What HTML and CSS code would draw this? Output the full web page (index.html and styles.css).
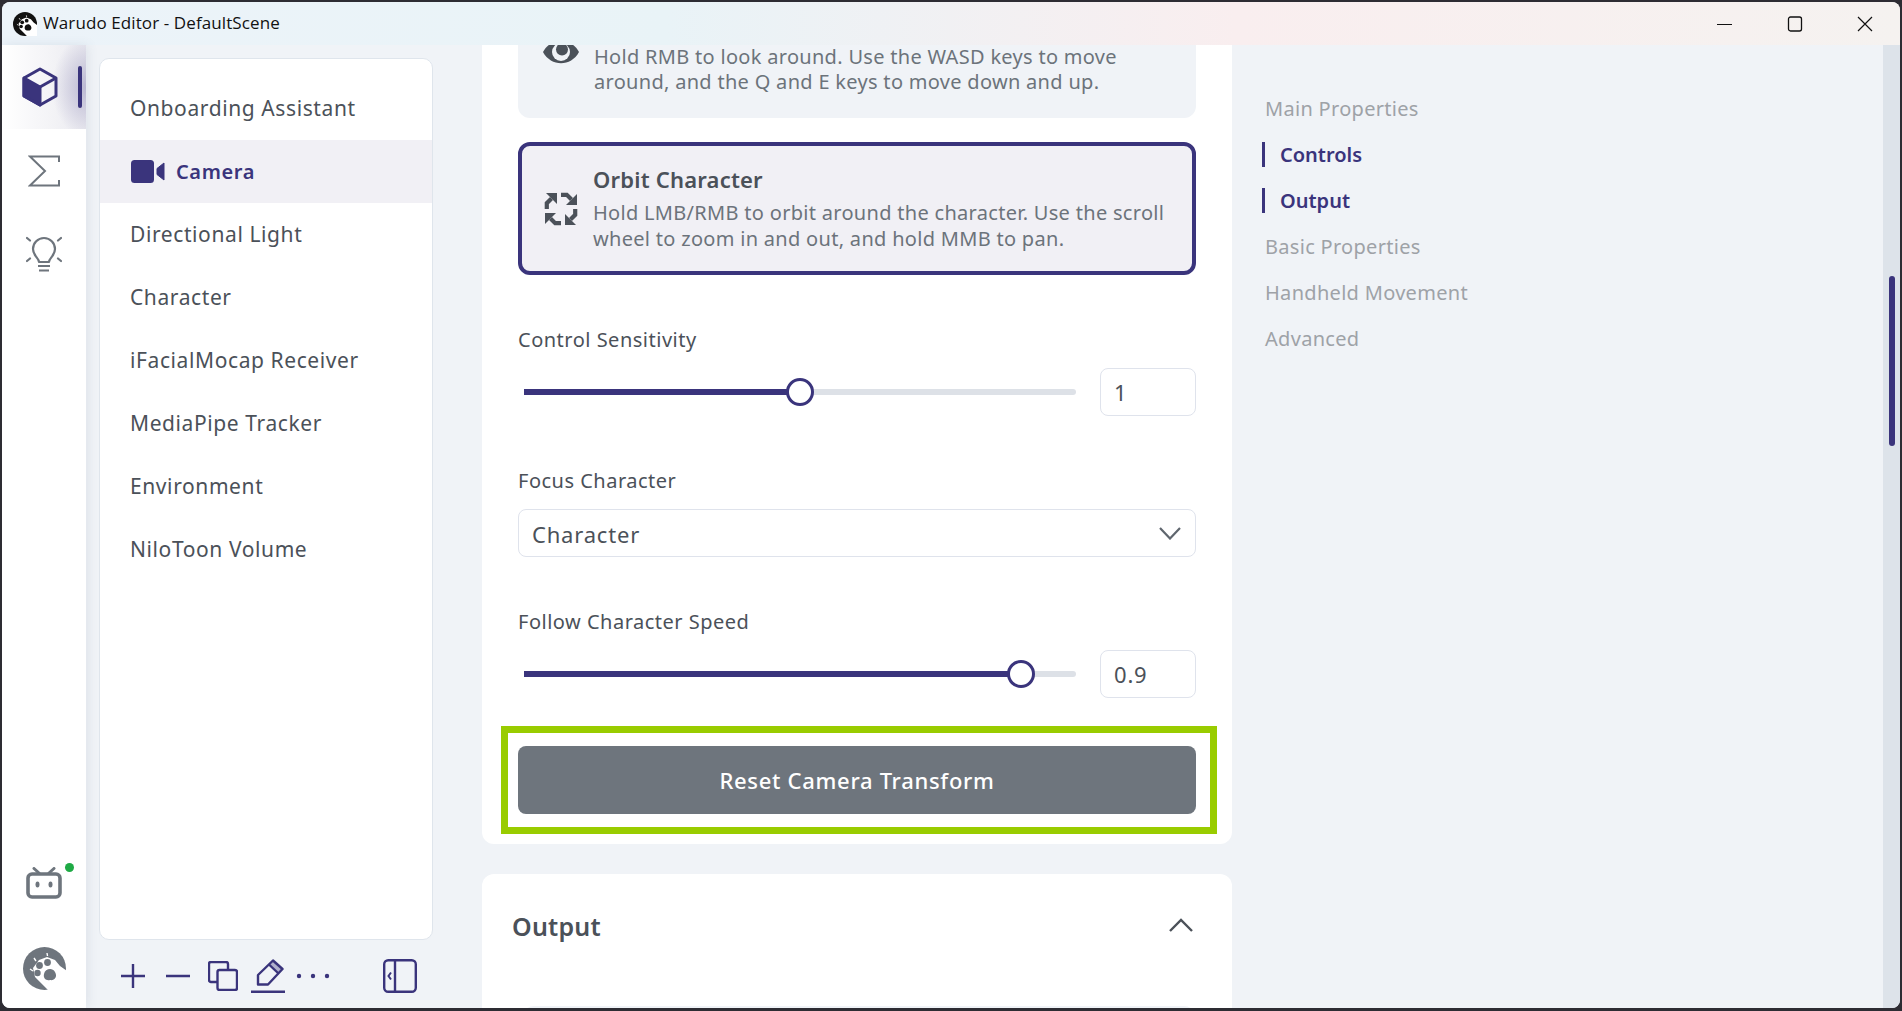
FILE: index.html
```html
<!DOCTYPE html>
<html>
  <head>
    <title>Warudo Editor - DefaultScene</title>
    <link rel="stylesheet" href="styles.css">
  </head>
  <body>
    <svg class="defs" width="0" height="0">
      <symbol id="paw" viewBox="0 0 43 43">
        <circle cx="21.5" cy="21.5" r="21.5" fill="currentColor"/>
        <path d="M12 30 L10 21 L16 13 L24 10 L32 13 L37 19 L44 24 V44 H26 Z" fill="#fff"/>
        <circle cx="16.5" cy="18.5" r="3.4" fill="currentColor"/>
        <circle cx="24.5" cy="15.5" r="3.4" fill="currentColor"/>
        <circle cx="14.5" cy="26" r="3.2" fill="currentColor"/>
        <path d="M21 27 C22 22 29 20 32 25 C35 30 31 34 27 33 C23 34 20 31 21 27Z" fill="currentColor"/>
        <path d="M11 11 L13 14 M24 6 L24.500 9 M7 22 L10 24" stroke="#fff" stroke-width="1.400"/>
      </symbol>
    </svg>

    <div class="window">
      <div class="titlebar">
        <svg class="title-logo" width="24" height="24"><use href="#paw"/></svg>
        <span class="title-text">Warudo Editor - DefaultScene</span>
        <div class="win-buttons">
          <div class="win-btn">
            <svg width="16" height="16" viewBox="0 0 16 16"><path d="M0 8.500 H15" stroke="#111" fill="none"/></svg>
          </div>
          <div class="win-btn">
            <svg width="16" height="16" viewBox="0 0 16 16"><rect x="1.500" y="1" width="13" height="14" rx="2" stroke="#111" stroke-width="1.300" fill="none"/></svg>
          </div>
          <div class="win-btn">
            <svg width="16" height="16" viewBox="0 0 16 16"><path d="M1 1 L15 15 M15 1 L1 15" stroke="#111" stroke-width="1.200" fill="none"/></svg>
          </div>
        </div>
      </div>

      <div class="app">
        <div class="rail">
          <div class="rail-item selected">
            <svg width="36" height="40" viewBox="0 0 36 40">
              <path d="M18 2 L34 11 V29 L18 38 L2 29 V11 Z" fill="none" stroke="#3a347c" stroke-width="3" stroke-linejoin="round"/>
              <path d="M2 11 L18 20 V38 L2 29 Z" fill="#3a347c" stroke="#3a347c" stroke-width="3" stroke-linejoin="round"/>
              <path d="M18 20 L34 11" stroke="#3a347c" stroke-width="3"/>
            </svg>
            <span class="rail-bar"></span>
          </div>
          <div class="rail-item">
            <svg width="32" height="32" viewBox="0 0 32 32">
              <path d="M31 7 V1.500 H2 L17 16 L2 30.500 H31 V25" fill="none" stroke="#6e757d" stroke-width="2"/>
            </svg>
          </div>
          <div class="rail-item">
            <svg width="36" height="38" viewBox="0 0 36 38">
              <path d="M13 26 C13 22 7 20 7 13 A11 11 0 0 1 29 13 C29 20 23 22 23 26 Z" fill="none" stroke="#6e757d" stroke-width="2.200" stroke-linejoin="round"/>
              <path d="M12 30 H24 M13 34.500 H23" stroke="#6e757d" stroke-width="2.200"/>
              <path d="M1 2 L4 4.500 M35 2 L32 4.500 M1 25 L4 22.500 M35 25 L32 22.500" stroke="#6e757d" stroke-width="2.200" stroke-linecap="round"/>
            </svg>
          </div>
          <div class="rail-bottom">
            <div class="tv">
              <svg width="36" height="32" viewBox="0 0 36 32">
                <path d="M8 1.500 L13 6 M28 1.500 L23 6" stroke="#6e757d" stroke-width="3" stroke-linecap="round"/>
                <rect x="2" y="7" width="32" height="23" rx="4" fill="none" stroke="#6e757d" stroke-width="3.600"/>
                <ellipse cx="11.500" cy="17.500" rx="2" ry="3" fill="#6e757d"/>
                <ellipse cx="24.500" cy="17.500" rx="2" ry="3" fill="#6e757d"/>
              </svg>
              <span class="status-dot"></span>
            </div>
            <svg class="rail-logo" width="43" height="43"><use href="#paw"/></svg>
          </div>
        </div>

        <div class="sidebar">
          <div class="entity-list">
            <div class="entity">Onboarding Assistant</div>
            <div class="entity current">
              <svg width="34" height="23" viewBox="0 0 34 23">
                <rect width="23" height="23" rx="3.500" fill="#3a347c"/>
                <path d="M26 8.500 L33 3 V20 L26 14.500 Z" fill="#3a347c" stroke="#3a347c" stroke-linejoin="round"/>
              </svg>
              <span>Camera</span>
            </div>
            <div class="entity">Directional Light</div>
            <div class="entity">Character</div>
            <div class="entity">iFacialMocap Receiver</div>
            <div class="entity">MediaPipe Tracker</div>
            <div class="entity">Environment</div>
            <div class="entity">NiloToon Volume</div>
          </div>
          <div class="toolbar">
            <svg class="tool-plus" width="24" height="24" viewBox="0 0 24 24"><path d="M0 12 H24 M12 0 V24" stroke="#3a347c" stroke-width="2.400"/></svg>
            <svg class="tool-minus" width="24" height="24" viewBox="0 0 24 24"><path d="M0 12 H24" stroke="#3a347c" stroke-width="2.400"/></svg>
            <svg class="tool-copy" width="30" height="30" viewBox="0 0 30 30">
              <path d="M9 21 H3 A2 2 0 0 1 1 19 V3 A2 2 0 0 1 3 1 H18 A2 2 0 0 1 20 3 V9" fill="none" stroke="#3a347c" stroke-width="2.400"/>
              <rect x="9.500" y="9" width="19.500" height="20" rx="2" fill="none" stroke="#3a347c" stroke-width="2.400"/>
            </svg>
            <svg class="tool-edit" width="34" height="34" viewBox="0 0 34 34">
              <path d="M7 25.500 V16 L22 1.500 L31.500 10 L17 25.500 Z" fill="none" stroke="#3a347c" stroke-width="2.400" stroke-linejoin="round"/>
              <path d="M18 5.500 L27.500 14.500" stroke="#3a347c" stroke-width="2.400"/>
              <path d="M22 1.500 L31.500 10 L27.500 14.500 L18 5.500 Z" fill="#3a347c" fill-opacity=".35"/>
              <path d="M0 32.800 H34" stroke="#3a347c" stroke-width="2.400"/>
            </svg>
            <svg class="tool-more" width="36" height="6" viewBox="0 0 36 6">
              <circle cx="4" cy="3" r="2.200" fill="#3a347c"/>
              <circle cx="18" cy="3" r="2.200" fill="#3a347c"/>
              <circle cx="32" cy="3" r="2.200" fill="#3a347c"/>
            </svg>
            <svg class="tool-panel" width="34" height="34" viewBox="0 0 34 34">
              <rect x="1.200" y="1.200" width="31.600" height="31.600" rx="4" fill="none" stroke="#3a347c" stroke-width="2.400"/>
              <path d="M12 1 V33" stroke="#3a347c" stroke-width="2.400"/>
              <path d="M8 13.500 L5.500 17 L8 20.500" fill="none" stroke="#3a347c" stroke-width="2"/>
            </svg>
          </div>
        </div>

        <div class="main">
          <div class="main-inner">
            <div class="section">
              <div class="mode-card">
                <svg class="mode-icon" width="36" height="28" viewBox="0 0 36 28">
                  <path d="M0 14 C8 -1 28 -1 36 14 C28 29 8 29 0 14Z" fill="#4b5159"/>
                  <circle cx="18" cy="14" r="9" fill="#f0f3f7"/>
                  <circle cx="19" cy="11.500" r="6" fill="#4b5159"/>
                </svg>
                <div>
                  <div class="mode-title-space"></div>
                  <div class="mode-desc">Hold RMB to look around. Use the WASD keys to move<br>around, and the Q and E keys to move down and up.</div>
                </div>
              </div>

              <div class="mode-card active">
                <svg class="mode-icon orbit" width="34" height="34" viewBox="0 0 34 34">
                  <g id="orbit-arrow">
                    <path d="M13 1 H2 L13 12 Z" fill="#4b5159"/>
                    <path d="M7.500 6.500 L2.800 11.200 V17" fill="none" stroke="#4b5159" stroke-width="4.200"/>
                  </g>
                  <use href="#orbit-arrow" transform="rotate(90 17 17)"/>
                  <use href="#orbit-arrow" transform="rotate(180 17 17)"/>
                  <use href="#orbit-arrow" transform="rotate(270 17 17)"/>
                </svg>
                <div>
                  <div class="mode-title">Orbit Character</div>
                  <div class="mode-desc">Hold LMB/RMB to orbit around the character. Use the scroll<br>wheel to zoom in and out, and hold MMB to pan.</div>
                </div>
              </div>

              <div class="field">
                <div class="field-label">Control Sensitivity</div>
                <div class="slider-row">
                  <div class="slider">
                    <div class="slider-fill" style="width: 50%"><span class="slider-thumb"></span></div>
                  </div>
                  <div class="num-input">1</div>
                </div>
              </div>

              <div class="field">
                <div class="field-label">Focus Character</div>
                <div class="select">
                  <span>Character</span>
                  <svg width="22" height="13" viewBox="0 0 22 13"><path d="M1 1 L11 11.500 L21 1" fill="none" stroke="#5f666e" stroke-width="2.200"/></svg>
                </div>
              </div>

              <div class="field">
                <div class="field-label">Follow Character Speed</div>
                <div class="slider-row">
                  <div class="slider">
                    <div class="slider-fill" style="width: 90%"><span class="slider-thumb"></span></div>
                  </div>
                  <div class="num-input">0.9</div>
                </div>
              </div>

              <div class="reset-wrap">
                <button class="reset-btn" type="button">Reset Camera Transform</button>
                <div class="highlight"></div>
              </div>
            </div>

            <div class="section output">
              <div class="output-head">
                <span>Output</span>
                <svg width="24" height="14" viewBox="0 0 24 14"><path d="M1 13 L12 2 L23 13" fill="none" stroke="#4b5159" stroke-width="2.400"/></svg>
              </div>
              <div class="output-box"></div>
            </div>
          </div>
        </div>

        <div class="outline">
          <div class="outline-item"><span>Main Properties</span></div>
          <div class="outline-item active"><span>Controls</span></div>
          <div class="outline-item active"><span>Output</span></div>
          <div class="outline-item"><span>Basic Properties</span></div>
          <div class="outline-item"><span>Handheld Movement</span></div>
          <div class="outline-item"><span>Advanced</span></div>
        </div>

        <div class="scrollbar"><div class="scroll-thumb"></div></div>
      </div>
    </div>
  </body>
</html>
```

FILE: styles.css
```css
html, body {
  margin: 0;
  height: 100%;
  overflow: hidden;
}

body {
  background: #2d2c33;
  padding: 2px 2px 3px 2px;
  box-sizing: border-box;
  font-family: "Noto Sans", sans-serif;
  color: #4b5159;
}

.defs {
  display: block;
  height: 0;
}

.window {
  height: 100%;
  border-radius: 8px;
  overflow: hidden;
  display: flex;
  flex-direction: column;
  background: #f0f3f7;
}

.titlebar {
  height: 43px;
  flex: none;
  display: flex;
  align-items: center;
  padding-left: 11px;
  background: linear-gradient(90deg, #ecf3f9 0%, #e9f3f7 35%, #f9eeef 65%, #f5f2f0 100%);
}

.title-logo {
  color: #111;
  margin-right: 6px;
}

.title-text {
  font-family: "Open Sans", sans-serif;
  font-size: 17px;
  letter-spacing: 0.1px;
  color: #111;
  padding-bottom: 2px;
}

.win-buttons {
  margin-left: auto;
  display: flex;
}

.win-btn {
  width: 70px;
  height: 43px;
  display: flex;
  align-items: center;
  justify-content: center;
}

.app {
  flex: 1;
  min-height: 0;
  display: grid;
  grid-template-columns: 84px 396px 750px 1fr 17px;
}

/* left rail */
.rail {
  background: #fff;
  display: flex;
  flex-direction: column;
  box-shadow: 2px 0 10px rgba(70, 85, 115, 0.1);
  position: relative;
}

.rail-item {
  height: 84px;
  flex: none;
  display: flex;
  align-items: center;
  padding-left: 20px;
  box-sizing: border-box;
  position: relative;
}

.rail-item:nth-child(2) {
  padding-left: 26px;
}

.rail-item:nth-child(3) {
  padding-left: 24px;
}

.rail-item.selected {
  background:
    radial-gradient(ellipse 34px 50px at 100% 50%, rgba(140, 135, 180, 0.5), rgba(140, 135, 180, 0) 100%),
    linear-gradient(90deg, #fff 0%, #f3f3f6 60%, #eaeaf0 100%);
}

.rail-bar {
  position: absolute;
  left: 76px;
  top: 21px;
  width: 4px;
  height: 42px;
  border-radius: 2px;
  background: #3a347c;
}

.rail-bottom {
  margin-top: auto;
  padding: 0 0 18px 21px;
  display: flex;
  flex-direction: column;
}

.tv {
  position: relative;
  width: 36px;
  height: 32px;
  margin: 0 0 48px 3px;
}

.tv svg {
  display: block;
}

.status-dot {
  position: absolute;
  left: 39px;
  top: -4px;
  width: 9px;
  height: 9px;
  border-radius: 50%;
  background: #1faa45;
}

.rail-logo {
  color: #6e757d;
  display: block;
}

/* entity list */
.sidebar {
  padding: 13px 0 0 13px;
  display: flex;
  flex-direction: column;
}

.entity-list {
  width: 334px;
  height: 882px;
  box-sizing: border-box;
  flex: none;
  background: #fff;
  border: 1px solid #dfe5ec;
  border-radius: 10px;
  padding-top: 18px;
}

.entity {
  height: 63px;
  box-sizing: border-box;
  display: flex;
  align-items: center;
  padding: 0 0 1px 30px;
  font-size: 21px;
  letter-spacing: 0.6px;
}

.entity.current {
  background: #f1f0f5;
  color: #3a347c;
  font-size: 20px;
  font-weight: 600;
  gap: 11px;
  letter-spacing: 0.6px;
  padding: 0 0 0 31px;
}

.toolbar {
  flex: 1;
  display: flex;
  align-items: center;
  padding: 4px 0 0 22px;
}

.toolbar svg {
  flex: none;
}

.tool-minus {
  margin-left: 21px;
}

.tool-copy {
  margin-left: 18px;
}

.tool-edit {
  margin-left: 13px;
}

.tool-more {
  margin-left: 10px;
}

.tool-panel {
  margin-left: 52px;
}

/* main column */
.main {
  overflow: hidden;
}

.main-inner {
  margin-top: -100px;
}

.section {
  background: #fff;
  border-radius: 12px;
  padding: 40px 36px 30px 36px;
}

.mode-card {
  height: 133px;
  box-sizing: border-box;
  margin-bottom: 24px;
  background: #f0f3f7;
  border-radius: 12px;
  display: flex;
  align-items: center;
  padding-left: 25px;
  gap: 15px;
}

.mode-card.active {
  background: #f1f0f5;
  border: 4px solid #3a347c;
  padding-left: 22px;
  margin-bottom: 0;
}

.mode-icon {
  flex: none;
}

.mode-icon.orbit {
  margin-top: 1px;
}

.mode-title {
  font-size: 22px;
  font-weight: 600;
  line-height: 30px;
  letter-spacing: 0.2px;
  margin: -2px 0 6px;
}

.mode-title-space {
  height: 35px;
}

.mode-desc {
  font-size: 20px;
  line-height: 25.5px;
  color: #6c737b;
  letter-spacing: 0.3px;
}

.field {
  margin-top: 53px;
}

.field-label {
  font-size: 20px;
  line-height: 24px;
  letter-spacing: 0.5px;
  margin-bottom: 16px;
}

.slider-row {
  display: flex;
  align-items: center;
  gap: 24px;
  padding-left: 6px;
}

.slider {
  flex: 1;
  height: 6px;
  border-radius: 3px;
  background: #dde1e7;
}

.slider-fill {
  position: relative;
  height: 100%;
  background: #3a347c;
}

.slider-thumb {
  position: absolute;
  right: -14px;
  top: -11px;
  width: 28px;
  height: 28px;
  box-sizing: border-box;
  border: 3px solid #3a347c;
  border-radius: 50%;
  background: #fff;
}

.num-input {
  width: 96px;
  height: 48px;
  box-sizing: border-box;
  border: 1px solid #dfe3ec;
  border-radius: 8px;
  padding-left: 13px;
  display: flex;
  align-items: center;
  font-size: 22px;
  letter-spacing: 0.8px;
}

.select {
  height: 48px;
  box-sizing: border-box;
  border: 1px solid #dfe3ec;
  border-radius: 8px;
  padding: 0 14px 0 13px;
  display: flex;
  align-items: center;
  justify-content: space-between;
  font-size: 22px;
  letter-spacing: 0.8px;
}

.select span {
  padding-top: 2px;
}

.reset-wrap {
  position: relative;
  margin-top: 48px;
}

.reset-btn {
  display: block;
  width: 100%;
  height: 68px;
  border: none;
  border-radius: 8px;
  background: #6e757d;
  color: #fff;
  font-family: "Noto Sans", sans-serif;
  font-size: 22px;
  font-weight: 500;
  letter-spacing: 0.7px;
}

.highlight {
  position: absolute;
  top: -20px;
  bottom: -20px;
  left: -17px;
  right: -21px;
  border: 7px solid #99cc00;
}

.output {
  margin-top: 30px;
  padding: 36px 36px 0 30px;
}

.output-head {
  display: flex;
  align-items: center;
  justify-content: space-between;
  font-size: 25px;
  line-height: 32px;
  font-weight: 600;
  letter-spacing: 0.2px;
  padding-right: 3px;
}

.output-head svg {
  margin-bottom: 2px;
}

.output-box {
  margin: 64px 0 0 10px;
  height: 60px;
  border-radius: 12px;
  background: #f0f3f7;
}

/* right outline */
.outline {
  padding: 40px 0 0 30px;
}

.outline-item {
  height: 46px;
  display: flex;
  align-items: center;
  font-size: 20px;
  letter-spacing: 0.3px;
  color: #9ea2a7;
}

.outline-item span {
  padding-left: 3px;
  line-height: 25px;
}

.outline-item.active {
  color: #3a347c;
  font-weight: 600;
  letter-spacing: 0;
}

.outline-item.active span {
  padding-left: 15px;
  border-left: 3px solid #3a347c;
}

.scrollbar {
  background: #dde3ea;
  padding: 231px 0 0 6px;
}

.scroll-thumb {
  width: 6px;
  height: 170px;
  border-radius: 3px;
  background: #3a347c;
}
```
